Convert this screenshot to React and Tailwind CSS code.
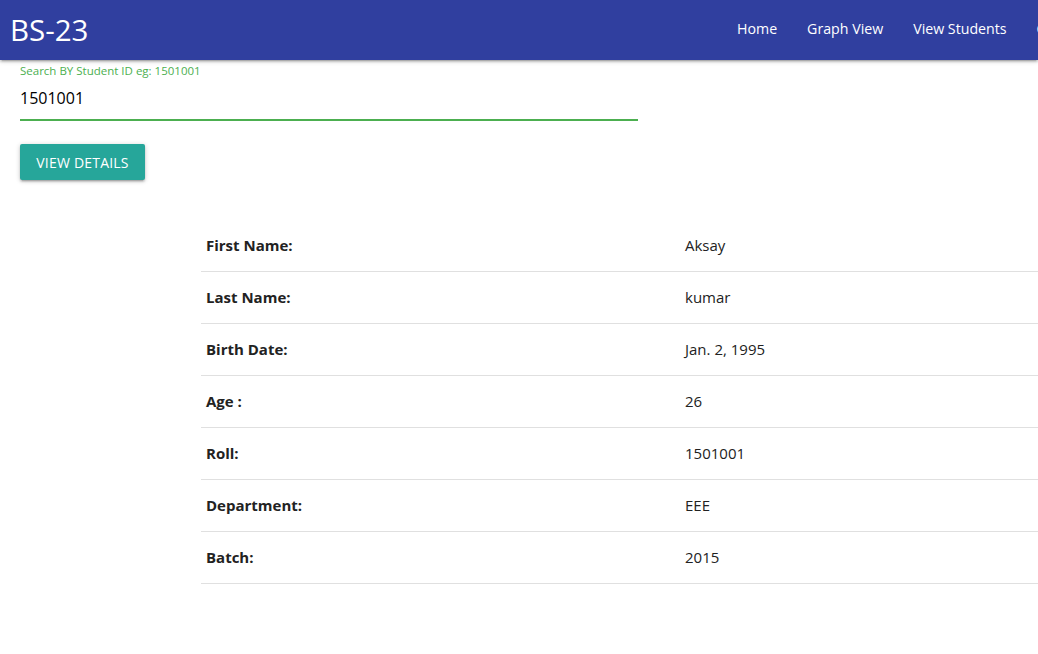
import { useState } from 'react';

const rows = [
    ['First Name:', 'Aksay'],
    ['Last Name:', 'kumar'],
    ['Birth Date:', 'Jan. 2, 1995'],
    ['Age :', '26'],
    ['Roll:', '1501001'],
    ['Department:', 'EEE'],
    ['Batch:', '2015'],
];

const App = () => {
    const [studentId, setStudentId] = useState('1501001');

    return (
        <div className="w-[1038px] h-[654px] overflow-hidden bg-white text-[15px] text-[rgba(0,0,0,0.87)] font-['Segoe_UI','Open_Sans',sans-serif]">
            {/* navbar */}
            <nav className="h-[60px] bg-[#303f9f] text-white flex items-center shadow-[0_2px_2px_0_rgba(0,0,0,0.14),0_3px_1px_-2px_rgba(0,0,0,0.12),0_1px_5px_0_rgba(0,0,0,0.2)] relative z-10">
                <div className="w-[722px] shrink-0 pl-[10px]">
                    <a className="text-[29.5px] leading-[58px] whitespace-nowrap">BS-23</a>
                </div>
                <ul className="flex h-full whitespace-nowrap shrink-0 text-[14.2px]">
                    <li><a className="block px-[15px] leading-[57px]">Home</a></li>
                    <li><a className="block px-[15px] leading-[57px]">Graph View</a></li>
                    <li><a className="block px-[15px] leading-[57px]">View Students</a></li>
                    <li><a className="block px-[15px] leading-[57px]">Create</a></li>
                </ul>
            </nav>

            {/* search */}
            <div className="pl-[20px] w-[638px]">
                <label className="block text-[11.5px] text-[#4caf50] pt-[3px] leading-[16px]">Search BY Student ID eg: 1501001</label>
                <input
                    value={studentId}
                    onChange={(e) => setStudentId(e.target.value)}
                    className="w-full h-[40px] pb-[3px] outline-none text-[16px] text-black border-b border-[#4caf50] shadow-[0_1px_0_0_#4caf50] mt-[1px]"
                />
                <button className="mt-[24px] h-[36px] w-[125px] rounded-[2px] bg-[#26a69a] text-white uppercase text-[14px] tracking-[0.2px] shadow-[0_2px_2px_0_rgba(0,0,0,0.14),0_3px_1px_-2px_rgba(0,0,0,0.12),0_1px_5px_0_rgba(0,0,0,0.2)]">
                    View Details
                </button>
            </div>

            {/* details table */}
            <table className="ml-[201px] mt-[40px] w-[960px] border-collapse">
                <tbody>
                    {rows.map(([label, value]) => (
                        <tr key={label} className="border-b border-[rgba(0,0,0,0.12)]">
                            <td className="w-[479px] px-[5px] py-[15px] leading-[21px] font-bold text-[#222]">{label}</td>
                            <td className="px-[5px] py-[15px] leading-[21px] text-[#222]">{value}</td>
                        </tr>
                    ))}
                </tbody>
            </table>
        </div>
    );
};

export default App;
